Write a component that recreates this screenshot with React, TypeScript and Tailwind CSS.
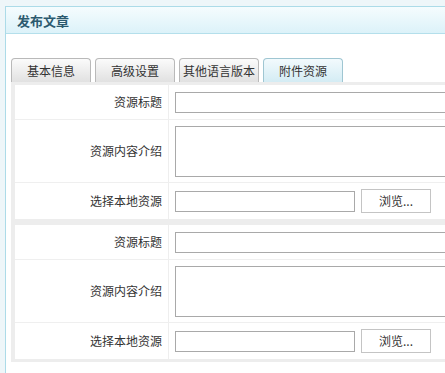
import React from "react";

const FONT = { fontFamily: '"Noto Sans CJK SC", "Noto Sans", sans-serif' };

const tabs = ["基本信息", "高级设置", "其他语言版本", "附件资源"];

function ResourceBlock() {
  return (
    <div className="bg-white flex flex-col">
      {/* 资源标题 */}
      <div className="flex h-[35px] border-b border-[#efefef]">
        <div className="w-[154px] shrink-0 border-r border-[#eeeeee] flex items-center justify-end pr-[6px] text-[12px] text-[#333]">
          资源标题
        </div>
        <div className="flex items-center pl-[6px]">
          <input className="w-[300px] h-[21px] border border-[#a9a9a9] bg-white outline-none" />
        </div>
      </div>
      {/* 资源内容介绍 */}
      <div className="flex h-[63px] border-b border-[#efefef]">
        <div className="w-[154px] shrink-0 border-r border-[#eeeeee] flex items-center justify-end pr-[6px] text-[12px] text-[#333]">
          资源内容介绍
        </div>
        <div className="flex items-center pl-[6px]">
          <textarea className="w-[300px] h-[51px] border border-[#a9a9a9] bg-white outline-none resize-none" />
        </div>
      </div>
      {/* 选择本地资源 */}
      <div className="flex h-[36px]">
        <div className="w-[154px] shrink-0 border-r border-[#eeeeee] flex items-center justify-end pr-[6px] text-[12px] text-[#333]">
          选择本地资源
        </div>
        <div className="flex items-center pl-[6px] gap-[6px]">
          <input className="w-[180px] h-[21px] border border-[#a9a9a9] bg-white outline-none" />
          <button className="w-[70px] h-[24px] border border-[#c4c4c4] bg-white text-[12px] text-[#333] leading-none">
            浏览...
          </button>
        </div>
      </div>
    </div>
  );
}

export default function App() {
  return (
    <div className="w-[445px] h-[373px] overflow-hidden bg-[#eef6f9] pl-[5px] pt-[6px]" style={FONT}>
      <div className="w-[480px] h-[400px] bg-white border-l border-t border-[#acdbe8]">
        {/* Header */}
        <div className="h-[27px] border-b border-[#b4dfeb] bg-gradient-to-b from-[#f5fcfe] to-[#dcf2f9] flex items-center pl-[11px]">
          <span className="text-[13px] font-bold text-[#2b5a6f] leading-none">发布文章</span>
        </div>

        {/* Tabs */}
        <div className="mt-[24px] ml-[5px] flex gap-[4px] h-[24px]">
          {tabs.map((t, i) => (
            <div
              key={t}
              className={`w-[80px] h-[24px] rounded-t-[4px] border border-b-0 flex items-center justify-center text-[12px] text-[#333] ${
                i === 3
                  ? "border-[#9fc6d2] bg-gradient-to-b from-[#f2fafd] to-[#d4ecf4]"
                  : "border-[#b9b9b9] bg-gradient-to-b from-[#fbfbfb] to-[#e1e1e1]"
              }`}
            >
              {t}
            </div>
          ))}
        </div>

        {/* Content */}
        <div className="ml-[5px] bg-[#ededed] pl-[4px] py-[3px] flex flex-col gap-[6px]">
          <ResourceBlock />
          <ResourceBlock />
        </div>
      </div>
    </div>
  );
}
